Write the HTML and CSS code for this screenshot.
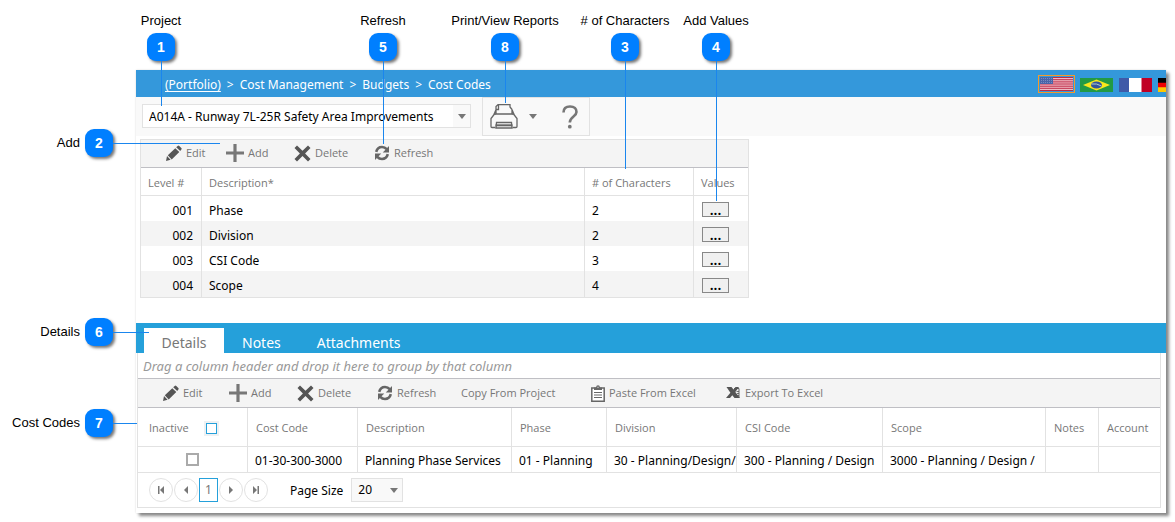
FILE: index.html
```html
<!DOCTYPE html>
<html lang="en">
<head>
<meta charset="utf-8">
<title>Cost Codes</title>
<link rel="stylesheet" href="styles.css">
</head>
<body>
<svg class="defs" aria-hidden="true">
  <symbol id="i-edit" viewBox="0 0 17 17"><path d="M1 16l1-5 3.600 3.800zM2.800 10.200L10.300 3.200l4 3.800-7.600 7.400zM11.200 2.300l1.500-1.400q.8-.6 1.600.1l2 2q.8.8.1 1.600L15.200 6.100z"/></symbol>
  <symbol id="i-add" viewBox="0 0 17 17"><path d="M7 0h3v7h7v3h-7v7H7v-7H0V7h7z"/></symbol>
  <symbol id="i-delete" viewBox="0 0 17 17"><path d="M3 .5l5.500 5.300L14 .5 16.500 3l-5.400 5.500 5.400 5.400-2.500 2.600-5.500-5.400L3 16.500.5 13.900l5.400-5.400L.5 3z"/></symbol>
  <symbol id="i-refresh" viewBox="0 0 16 16"><path d="M2.200 6.800C3 3.800 5.200 2 8 2c2 0 3.500.8 4.700 2.200" fill="none" stroke="currentColor" stroke-width="2.600"/><path d="M15 1v6.500H8.800z"/><path d="M13.800 9.200C13 12.200 10.800 14 8 14c-2 0-3.500-.8-4.700-2.200" fill="none" stroke="currentColor" stroke-width="2.600"/><path d="M1 15V8.500h6.200z"/></symbol>
  <symbol id="i-paste" viewBox="0 0 14 17"><path d="M.8 3h12.400v13.200H.8z" fill="#fff" stroke="currentColor" stroke-width="1.500"/><path d="M3 5V2.500h2Q5.200.3 7 .3t2 2.200h2V5z"/><path d="M6.500 1.700h1v1h-1z" fill="#fff"/><path d="M3 7.500h8M3 10h8M3 12.500h8" stroke="currentColor" fill="none"/></symbol>
  <symbol id="i-excel" viewBox="0 0 14 12"><path d="M.5 0h5l2 2.500L9.500 0H13L9.300 5l4.700 6H8.500L6.300 8.300 4 11H0l4.400-5.200z"/><path d="M8 1.500h5v9H9" fill="none" stroke="currentColor" stroke-width=".9"/><path d="M10.500 4.500H13M11 6.500h2M11.500 8.500H13" stroke="currentColor" stroke-width=".8"/></symbol>
  <symbol id="i-down" viewBox="0 0 8 5"><path d="M0 0h8L4 5z"/></symbol>
</svg>

<main class="app">
  <header class="topbar">
    <nav class="crumbs"><a href="#">(Portfolio)</a><span>&gt;</span><span>Cost Management</span><span>&gt;</span><span>Budgets</span><span>&gt;</span><span>Cost Codes</span></nav>
    <div class="flags">
      <button class="flag current" aria-label="English"><svg viewBox="0 0 33 14"><path fill="#eeb9c2" d="M0 0h33v14H0z"/><path d="M0 .5h33M0 2.700h33M0 4.900h33M0 7h33M0 9.200h33M0 11.300h33M0 13.500h33" stroke="#c02a48"/><path fill="#4a64a8" d="M0 0h13v7H0z"/><path d="M1 1.500h12M1 3.500h12M1 5.500h12" stroke="#8b9cca" stroke-width=".7" stroke-dasharray="1 1"/></svg></button>
      <button class="flag" aria-label="Português"><svg viewBox="0 0 33 14"><path fill="#229a45" d="M0 0h33v14H0z"/><path fill="#f8e71c" d="M3 7l13.500-5.500L30 7l-13.500 5.500z"/><ellipse cx="16.500" cy="7" rx="5.500" ry="3.600" fill="#34569b"/><path d="M11.500 6q5-1 10 2" stroke="#b4cfc8" fill="none"/></svg></button>
      <button class="flag" aria-label="Français"><svg viewBox="0 0 33 14"><path fill="#fff" d="M0 0h33v14H0z"/><path fill="#3f5aa8" d="M0 0h10v14H0z"/><path fill="#c00025" d="M22.500 0H33v14H22.500z"/></svg></button>
      <button class="flag" aria-label="Deutsch"><svg viewBox="0 0 33 14"><path fill="#ffc800" d="M0 0h33v14H0z"/><path fill="#f00000" d="M0 0h33v9.300H0z"/><path fill="#000" d="M0 0h33v4.700H0z"/></svg></button>
    </div>
  </header>

  <div class="actions">
    <label class="pick project"><select aria-label="Project"><option>A014A - Runway 7L-25R Safety Area Improvements</option></select><span class="arrow"><svg><use href="#i-down"/></svg></span></label>
    <div class="tools">
      <button class="print" aria-label="Print or view reports"><svg class="printer" viewBox="0 0 28 25"><g fill="none" stroke="#666" stroke-width="1.300"><path d="M6 10H4.500L1 14.500V22.500q0 1 1 1h3.500M22 10h1.500l3.500 4.500v8q0 1-1 1h-3.500"/><path d="M4 10.500L6 5.500V10h16V5.500l2 5"/><path d="M6 5.500V2.500l2-1.800h12V3l2 2.500"/><path d="M6 5.500h2.500V1"/><path d="M6 24l.5-5.500h15l.5 5.500z" fill="#fafafa"/><path d="M5.500 21.300h17" stroke-width="2"/></g></svg><svg class="caret"><use href="#i-down"/></svg></button>
      <button class="help" aria-label="Help"><svg viewBox="0 0 16 24"><path d="M1.500 7.500Q1.500 1.500 8 1.500t6.500 5.500c0 4.500-6.700 4.500-6.700 10.500" fill="none" stroke="#777" stroke-width="2.600"/><circle cx="7.800" cy="21.700" r="1.900" fill="#777"/></svg></button>
    </div>
  </div>

  <section class="levels">
    <div class="toolbar short">
      <button><svg><use href="#i-edit"/></svg>Edit</button>
      <button><svg class="plus"><use href="#i-add"/></svg>Add</button>
      <button><svg><use href="#i-delete"/></svg>Delete</button>
      <button><svg class="turn"><use href="#i-refresh"/></svg>Refresh</button>
    </div>
    <table>
      <colgroup><col class="w-level"><col><col class="w-chars"><col class="w-values"></colgroup>
      <thead><tr><th>Level #</th><th>Description*</th><th># of Characters</th><th>Values</th></tr></thead>
      <tbody>
        <tr><td>001</td><td>Phase</td><td>2</td><td><button class="more">...</button></td></tr>
        <tr><td>002</td><td>Division</td><td>2</td><td><button class="more">...</button></td></tr>
        <tr><td>003</td><td>CSI Code</td><td>3</td><td><button class="more">...</button></td></tr>
        <tr><td>004</td><td>Scope</td><td>4</td><td><button class="more">...</button></td></tr>
      </tbody>
    </table>
  </section>

  <div class="tabs" role="tablist">
    <button role="tab" aria-selected="true">Details</button>
    <button role="tab" aria-selected="false">Notes</button>
    <button role="tab" aria-selected="false">Attachments</button>
  </div>

  <section class="details">
    <p class="group">Drag a column header and drop it here to group by that column</p>
    <div class="toolbar long">
      <button><svg><use href="#i-edit"/></svg>Edit</button>
      <button><svg class="plus"><use href="#i-add"/></svg>Add</button>
      <button><svg><use href="#i-delete"/></svg>Delete</button>
      <button><svg class="turn"><use href="#i-refresh"/></svg>Refresh</button>
      <button>Copy From Project</button>
      <button><svg class="clip"><use href="#i-paste"/></svg>Paste From Excel</button>
      <button><svg class="sheet"><use href="#i-excel"/></svg>Export To Excel</button>
    </div>
    <table>
      <colgroup><col class="w-inactive"><col class="w-code"><col class="w-desc"><col class="w-phase"><col class="w-division"><col class="w-csi"><col><col class="w-notes"><col class="w-account"></colgroup>
      <thead><tr><th><label class="all">Inactive<input type="checkbox"></label></th><th>Cost Code</th><th>Description</th><th>Phase</th><th>Division</th><th>CSI Code</th><th>Scope</th><th>Notes</th><th>Account</th></tr></thead>
      <tbody><tr><td class="tick"><input type="checkbox" aria-label="Inactive"></td><td>01-30-300-3000</td><td>Planning Phase Services</td><td>01 - Planning</td><td>30 - Planning/Design/</td><td>300 - Planning / Design</td><td>3000 - Planning / Design /</td><td></td><td></td></tr></tbody>
    </table>
    <footer class="pager">
      <button aria-label="First page"><svg viewBox="0 0 8 8"><path d="M1 0h1.500v8H1zM7 0v8L3 4z"/></svg></button>
      <button aria-label="Previous page"><svg viewBox="0 0 8 8"><path d="M6 0v8L2 4z"/></svg></button>
      <button class="page">1</button>
      <button aria-label="Next page"><svg viewBox="0 0 8 8"><path d="M2 0v8l4-4z"/></svg></button>
      <button aria-label="Last page"><svg viewBox="0 0 8 8"><path d="M5.500 0H7v8H5.500zM1 0v8l4-4z"/></svg></button>
      <label class="size" for="size">Page Size</label>
      <span class="pick count"><select id="size"><option>20</option></select><span class="arrow"><svg><use href="#i-down"/></svg></span></span>
    </footer>
  </section>
</main>

<div class="note top n1"><span>Project</span><b>1</b><i></i></div>
<div class="note top n5"><span>Refresh</span><b>5</b><i></i></div>
<div class="note top n8"><span>Print/View Reports</span><b>8</b><i></i></div>
<div class="note top n3"><span># of Characters</span><b>3</b><i></i></div>
<div class="note top n4"><span>Add Values</span><b>4</b><i></i></div>
<div class="note side n2"><span>Add</span><b>2</b><i></i></div>
<div class="note side n6"><span>Details</span><b>6</b><i></i></div>
<div class="note side n7"><span>Cost Codes</span><b>7</b><i></i></div>
</body>
</html>
```
FILE: styles.css
```css
* { box-sizing: border-box; }
body { margin: 0; padding: 70px 9px 9px 136px; background: #fff; color: #000; font: 12px/16px "Noto Sans", "Open Sans", sans-serif; position: relative; }
button, select, input { font: inherit; color: inherit; margin: 0; padding: 0; border: 0; background: none; border-radius: 0; }
svg { fill: currentColor; display: block; flex: none; }
.defs { position: absolute; width: 0; height: 0; }

.app { background: #fff; box-shadow: 3px 3px 3px #888, 0 0 2px #ddd; padding-bottom: 5px; }
.topbar { display: flex; justify-content: space-between; height: 27px; background: #3498db; color: #fff; }
.crumbs { display: flex; align-items: center; gap: 6px; padding: 2px 0 0 29px; }
.crumbs a { color: #fff; text-underline-offset: 2px; }
.flags { display: flex; align-items: center; gap: 4px; width: 128px; overflow: hidden; }
.flag { flex: none; display: flex; align-items: center; justify-content: center; width: 35px; height: 18px; padding-top: 2px; }
.flag.current { width: 37px; border: 1px solid #f59a28; padding: 0; }
.flag svg { width: 33px; height: 14px; }

.actions { display: flex; gap: 11px; height: 39px; padding-left: 6px; background: #f9f9f9; }
.pick { position: relative; display: block; border: 1px solid #e2e2e2; background: #fff; height: 24px; }
.pick select { appearance: none; width: 100%; height: 100%; padding-left: 6px; outline: 0; }
.pick .arrow { position: absolute; top: 0; right: 0; width: 17px; height: 100%; background: #f9f9f9; color: #777; display: flex; align-items: center; justify-content: center; pointer-events: none; }
.arrow svg, .caret { width: 8px; height: 5px; }
.project { width: 329px; margin-top: 7px; }
.project select { padding-top: 2px; }
.tools { display: flex; align-items: center; width: 108px; border: 1px solid #e2e2e2; color: #777; }
.print { display: flex; align-items: center; gap: 11px; padding-left: 7px; }
.printer { width: 28px; height: 25px; }
.help { padding-left: 25px; }
.help svg { width: 16px; height: 24px; }

.levels { width: 609px; margin: 3px 0 25px 4px; border: 1px solid #e2e2e2; }
.toolbar { display: grid; align-items: center; height: 28px; background: #f4f4f4; border-bottom: 1px solid #bfbfc4; color: #777; font-family: "Open Sans", "Noto Sans", sans-serif; font-size: 11px; }
.toolbar button { display: flex; align-items: center; gap: 4px; white-space: nowrap; }
.toolbar svg { width: 17px; height: 17px; color: #555; }
.toolbar .plus { width: 18px; height: 18px; color: #777; }
.toolbar .turn { width: 16px; height: 16px; color: #666; }
.toolbar .clip { width: 14px; height: 17px; color: #666; }
.toolbar .sheet { width: 14px; height: 12px; margin-right: 1px; }
.short { grid-template-columns: 61px 68px 80px auto; padding: 0 0 1px 24px; }
.long { grid-template-columns: 67px 68px 80px 84px 130px 135px auto; height: 30px; padding-left: 24px; border-top: 1px solid #bfbfc4; }

table { width: 100%; table-layout: fixed; border-collapse: separate; border-spacing: 0; }
th, td { padding: 0 0 0 7px; overflow: hidden; white-space: nowrap; text-align: left; border-left: 1px solid #e2e2e2; }
th:first-child, td:first-child { border-left: 0; }
th { height: 28px; padding-top: 2px; color: #777; font-family: "Open Sans", "Noto Sans", sans-serif; font-size: 11px; font-weight: 400; border-bottom: 1px solid #e2e2e2; }
.levels td { height: 25px; padding-top: 4px; }
.levels tr:last-child td { height: 26px; }
.levels td:first-child { text-align: right; padding-right: 8px; }
.levels tr:nth-child(even) td { background: #f4f4f4; }
.levels td:last-child { padding: 2px 0 0 8px; }
.w-level { width: 60px; }
.w-chars { width: 109px; }
.w-values { width: 55px; }
.more { display: block; width: 27px; height: 15px; border: 1px solid #888; background: #f0f0f0; font-size: 14px; font-weight: 600; line-height: 12px; }

.tabs { display: flex; align-items: flex-end; height: 30px; padding-left: 8px; background: #25a0da; color: #fff; font-size: 14px; }
.tabs button { height: 25px; padding: 4px 18px 0; }
.tabs [aria-selected="true"] { width: 80px; padding: 4px 0 0; background: #fff; color: #777; }

.details { margin: 0 5px 0 1px; border: 1px solid #e2e2e2; border-top: 0; }
.group { margin: 0; height: 25px; padding: 5px 5px 0; color: #999; font-size: 13px; font-style: italic; }
.details th { height: 39px; padding-left: 8px; }
.details td { height: 26px; padding-top: 2px; border-bottom: 1px solid #e2e2e2; }
.w-inactive { width: 109px; }
.w-code { width: 110px; }
.w-desc { width: 154px; }
.w-phase { width: 95px; }
.w-division { width: 130px; }
.w-csi { width: 146px; }
.w-notes { width: 53px; }
.w-account { width: 62px; }
.all { display: flex; align-items: center; gap: 17px; padding-left: 3px; }
input { appearance: none; display: block; width: 13px; height: 13px; border: 2px solid #aaa; background: #fff; }
.all input { width: 11px; height: 11px; border: 1px solid #25a0da; outline: 2px solid #eef1f3; }
.details .tick { padding: 0 0 0 48px; }
.pager { display: flex; align-items: center; gap: 1px; height: 34px; padding-left: 11px; }
.pager button { width: 24px; height: 24px; border: 1px solid #e2e2e2; border-radius: 50%; color: #777; display: flex; align-items: center; justify-content: center; }
.pager button svg { width: 8px; height: 8px; }
.pager .page { width: 19px; border-color: #25a0da; border-radius: 0; }
.size { padding: 2px 7px 0 21px; }
.count { width: 52px; background: #f9f9f9; }

.note { position: absolute; display: flex; align-items: center; font: 13px/16px "Liberation Sans", Arial, sans-serif; pointer-events: none; }
.note b { flex: none; width: 28px; height: 28px; border-radius: 9px; background: #007fff; color: #fff; box-shadow: 2px 2px 3px #777; font-size: 14px; line-height: 28px; text-align: center; }
.note i { background: #1a86ee; }
.top { flex-direction: column; width: 140px; top: 13px; }
.top span { height: 20px; }
.top i { width: 1px; }
.side { left: 0; height: 28px; }
.side span { width: 80px; margin-right: 5px; text-align: right; }
.side i { height: 1px; }
.n1 { left: 91px; } .n1 i { height: 45px; }
.n5 { left: 313px; } .n5 i { height: 83px; }
.n8 { left: 435px; } .n8 i { height: 42px; }
.n3 { left: 555px; } .n3 i { height: 108px; }
.n4 { left: 646px; } .n4 i { height: 140px; }
.n2 { top: 129px; } .n2 i { width: 107px; }
.n6 { top: 318px; } .n6 i { width: 36px; }
.n7 { top: 409px; } .n7 i { width: 24px; }
```
